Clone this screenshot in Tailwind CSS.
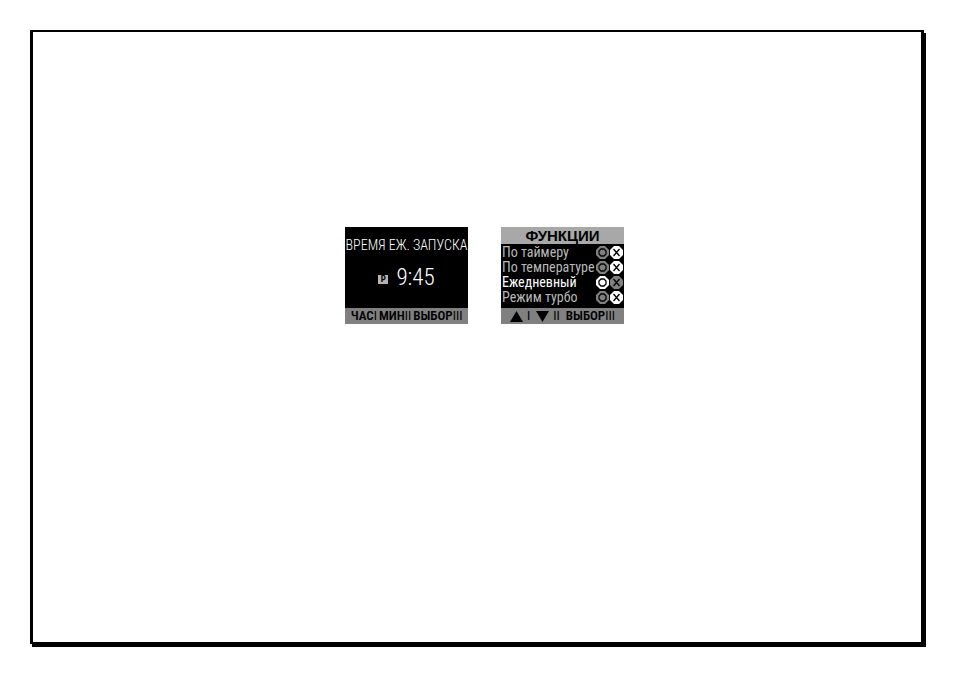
<!DOCTYPE html>
<html lang="ru">
  <head>
    <meta charset="UTF-8" />
    <meta name="viewport" content="width=device-width, initial-scale=1.0" />
    <title>Время еж. запуска</title>
    <script src="https://cdn.jsdelivr.net/npm/@tailwindcss/browser@4"></script>
  </head>
  <body class="bg-white min-h-screen flex p-[30px] font-['Roboto_Condensed',Roboto,sans-serif]">
    <main class="flex-1 flex justify-center items-start gap-[33px] pl-[15px] pt-[195px] border-black border-x-3 border-y-2 shadow-[2px_3px_0_#000]">
      <section class="w-[123px] bg-black flex flex-col">
        <h1 class="pt-2 text-[14px] leading-[20px] font-light text-white text-center whitespace-nowrap">ВРЕМЯ ЕЖ. ЗАПУСКА</h1>
        <div class="h-[53px] flex items-center justify-center gap-2 pb-2">
          <span class="w-[10px] h-[9px] mt-1 bg-[#b4b4b4] text-black font-bold text-[9px] leading-[9px] text-center">P</span>
          <time class="font-light text-[23px] leading-[20px] text-white">9:45</time>
        </div>
        <footer class="h-4 bg-[#808080] flex items-center justify-center gap-0.5 text-[13px] leading-[16px] font-semibold text-black whitespace-nowrap">
          <button type="button">ЧАС<span class="font-normal">I</span></button>
          <button type="button">МИН<span class="font-normal">II</span></button>
          <button type="button">ВЫБОР<span class="font-normal">III</span></button>
        </footer>
      </section>

      <section class="w-[123px] bg-black flex flex-col">
        <h2 class="h-[17px] bg-[#a8a8a8] font-['Liberation_Sans'] font-bold text-[15px] leading-[18px] text-black text-center">ФУНКЦИИ</h2>
        <form id="functions" class="pt-px pb-[3px] text-[14px] leading-[15px] text-[#b8b8b8]"></form>
        <footer class="h-4 bg-[#808080] flex items-center justify-center gap-1.5 text-[13px] leading-[16px] font-semibold text-black whitespace-nowrap">
          <button type="button" aria-label="Вверх" class="flex items-center gap-1"><svg class="w-[13px] h-[11px]" viewBox="0 0 13 11"><path d="M6.5 0L13 11H0z" /></svg><span class="font-normal">I</span></button>
          <button type="button" aria-label="Вниз" class="flex items-center gap-1"><svg class="w-[13px] h-[11px]" viewBox="0 0 13 11"><path d="M0 0H13L6.5 11z" /></svg><span class="font-normal">II</span></button>
          <button type="button">ВЫБОР<span class="font-normal">III</span></button>
        </footer>
      </section>
    </main>

    <script>
      const functions = [
        { id: "timer", name: "По таймеру", on: false },
        { id: "temp", name: "По температуре", on: false },
        { id: "daily", name: "Ежедневный", on: true },
        { id: "turbo", name: "Режим турбо", on: false },
      ];

      const marks = {
        on: '<path d="M5 3h3l2 2v3l-2 2h-3l-2-2v-3z" />',
        off: '<path d="M3.5 3L9.5 10M9.5 3L3.5 10" />',
      };

      const option = (item, value, checked) => `
        <label class="relative block w-[13px] h-[13px]">
          <input type="radio" name="${item.id}" value="${value}" aria-label="${item.name}: ${value}" class="peer absolute inset-0 opacity-0" ${checked ? "checked" : ""} />
          <svg class="w-[13px] h-[13px] text-[#808080] peer-checked:text-white" viewBox="0 0 13 13">
            <path fill="currentColor" d="M4 0h5l4 4v5l-4 4h-5l-4-4v-5z" />
            <g fill="none" stroke="#000" stroke-width="1.3">${marks[value]}</g>
          </svg>
        </label>`;

      document.getElementById("functions").innerHTML = functions
        .map((item) => `
          <div class="flex items-center px-px gap-px h-[15px] whitespace-nowrap ${item.on ? "text-white" : ""}">
            <span class="flex-1">${item.name}</span>
            ${option(item, "on", item.on)}
            ${option(item, "off", !item.on)}
          </div>`)
        .join("");
    </script>
  </body>
</html>
